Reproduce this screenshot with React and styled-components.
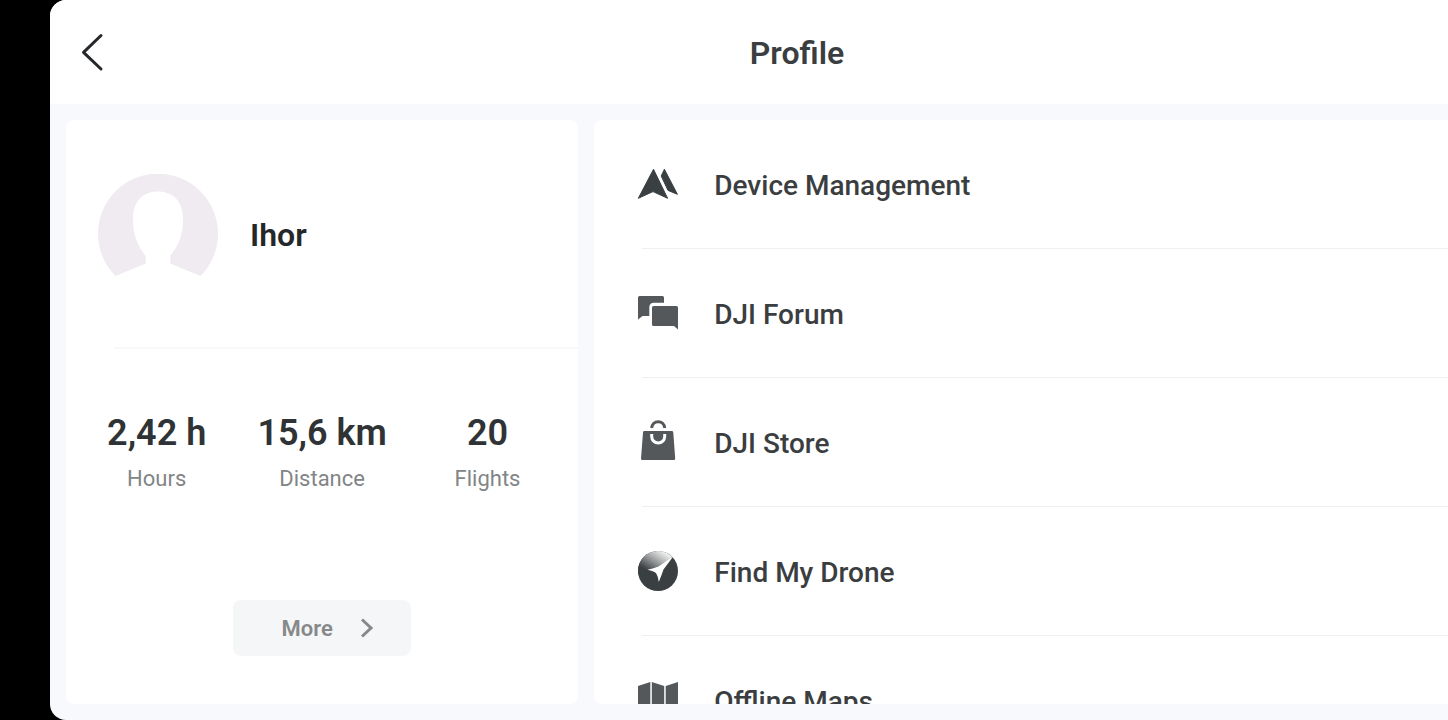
import React from 'react';
import styled, { createGlobalStyle } from 'styled-components';

const stats = [
  { label: 'Hours', value: '2,42 h' },
  { label: 'Distance', value: '15,6 km' },
  { label: 'Flights', value: '20' },
];

const DeviceIcon = () => (
  <Icon viewBox="0 0 40 40" aria-hidden="true">
    <g fill="#3a3f41" stroke="#3a3f41" strokeWidth="1" strokeLinejoin="round">
      <path d="M15.5 5.3 29.6 34.3 15 27.6.3 34.3Z" />
      <path d="M26.4 5.3 39.4 30.3 30 26.4 23.2 12Z" />
    </g>
  </Icon>
);

const ForumIcon = () => (
  <Icon viewBox="0 0 40 40" aria-hidden="true">
    <g fill="#55585b">
      <path d="M1.5 3H24.5Q26 3 26 4.5V9.8H16Q11.3 9.8 11.3 14.5V23H4.5L0 26.5V4.5Q0 3 1.5 3Z" />
      <path d="M15.5 13H38.5Q40 13 40 14.5V36.5L36 33H15.5Q14 33 14 31.5V14.5Q14 13 15.5 13Z" />
    </g>
  </Icon>
);

const StoreIcon = () => (
  <Icon viewBox="0 0 40 40" aria-hidden="true">
    <path
      d="M6.5 9H33.8Q35.2 9 35.3 10.4L37.2 36.4Q37.2 38 35.7 38H4.5Q3 38 3 36.4L5 10.4Q5.1 9 6.5 9Z"
      fill="#55585b"
    />
    <path d="M13.7 6C14 2 16.8-.3 20.2-.3S26.4 2 26.7 6" fill="none" stroke="#55585b" strokeWidth="3" />
    <path d="M13.7 12V14.5A6.5 6.5 0 0 0 26.7 14.5V12" fill="none" stroke="#fff" strokeWidth="3" />
  </Icon>
);

const DroneIcon = () => (
  <Icon viewBox="0 0 40 40" aria-hidden="true">
    <defs>
      <linearGradient id="radar" gradientUnits="userSpaceOnUse" x1="28" y1="2" x2="15" y2="23">
        <stop offset="0" stopColor="#f2f2f2" />
        <stop offset="0.45" stopColor="#a4a6a7" />
        <stop offset="1" stopColor="#3a3f41" />
      </linearGradient>
    </defs>
    <circle cx="20" cy="20" r="20" fill="#3a3f41" />
    <path d="M20 20 34.2 5.9A20 20 0 0 0 .3 23.5L12 22Z" fill="url(#radar)" />
    <path d="M35.2 5.5 25.5 18.5Q24 23 20.8 31Q20 25 18 22Q15 19.8 9.5 18.8Q16 17.5 20.5 15.6Z" fill="#fff" />
  </Icon>
);

const MapIcon = () => (
  <Icon viewBox="0 0 40 40" aria-hidden="true">
    <g fill="#55585b">
      <path d="M0 6 12.3 2V34L0 38Z" />
      <path d="M13.8 2 26.2 6V38L13.8 34Z" />
      <path d="M27.7 6 40 2V34L27.7 38Z" />
    </g>
  </Icon>
);

const menu = [
  { label: 'Device Management', icon: DeviceIcon },
  { label: 'DJI Forum', icon: ForumIcon },
  { label: 'DJI Store', icon: StoreIcon },
  { label: 'Find My Drone', icon: DroneIcon },
  { label: 'Offline Maps', icon: MapIcon },
];

const App = () => {
  return (
    <>
      <GlobalStyle />
      <Sheet>
        <Header>
          <BackButton type="button" aria-label="Back">
            <BackArrow viewBox="0 0 24 40" aria-hidden="true">
              <path d="M21 3.5 3.5 20.3 21 37" />
            </BackArrow>
          </BackButton>
          <Title>Profile</Title>
        </Header>
        <Content>
          <ProfileCard>
            <User>
              <Avatar viewBox="0 0 120 120" aria-hidden="true">
                <path d="M17.5 102A60 60 0 1 1 102.5 102L72.3 89.5V82C78 74 85 65 85 45C85 27 75 17.5 60 17.5S35 27 35 45C35 65 42 74 47.7 82V89.5Z" />
              </Avatar>
              <UserName>Ihor</UserName>
            </User>
            <Divider />
            <Stats>
              {stats.map((stat) => (
                <Stat key={stat.label}>
                  <StatLabel>{stat.label}</StatLabel>
                  <StatValue>{stat.value}</StatValue>
                </Stat>
              ))}
            </Stats>
            <MoreButton type="button">
              More
              <MoreArrow viewBox="0 0 16 20" aria-hidden="true">
                <path d="M3 1.5 12 10 3 18.5" />
              </MoreArrow>
            </MoreButton>
          </ProfileCard>
          <MenuCard>
            <Menu>
              {menu.map(({ label, icon: MenuIcon }) => (
                <MenuItem key={label}>
                  <MenuLink href="#">
                    <MenuIcon />
                    <MenuLabel>{label}</MenuLabel>
                  </MenuLink>
                </MenuItem>
              ))}
            </Menu>
          </MenuCard>
        </Content>
      </Sheet>
    </>
  );
};

const GlobalStyle = createGlobalStyle`
  * {
    box-sizing: border-box;
  }

  body {
    margin: 0;
    background-color: #000;
    font-family: Roboto, sans-serif;
  }
`;

const Sheet = styled.main`
  display: flex;
  flex-direction: column;
  height: 100vh;
  margin-left: 50px;
  background-color: #f7f9fc;
  border-radius: 16px 0 0 16px;
  overflow: hidden;
`;

const Header = styled.header`
  display: flex;
  align-items: center;
  flex-shrink: 0;
  height: 104px;
  background-color: #fff;
`;

const BackButton = styled.button`
  display: flex;
  align-items: center;
  width: 96px;
  height: 100%;
  padding: 0 30px;
  background: none;
  border: none;
`;

const BackArrow = styled.svg`
  width: 24px;
  height: 40px;
  fill: none;
  stroke: #25282a;
  stroke-width: 3;
  stroke-linecap: round;
  stroke-linejoin: round;
`;

const Title = styled.h1`
  flex: 1;
  margin: 0;
  padding-top: 2px;
  color: #3b3e40;
  font-size: 32px;
  font-weight: 600;
  text-align: center;
`;

const Content = styled.div`
  display: grid;
  flex: 1;
  grid-template-columns: minmax(0, 3fr) minmax(0, 5fr);
  grid-template-rows: minmax(0, 1fr);
  gap: 16px;
  min-height: 0;
  padding: 16px 0 16px 16px;
`;

const ProfileCard = styled.section`
  display: flex;
  flex-direction: column;
  background-color: #fff;
  border-radius: 8px;
  overflow: hidden;
`;

const User = styled.div`
  display: flex;
  align-items: center;
  gap: 32px;
  padding: 54px 32px 53px;
`;

const Avatar = styled.svg`
  width: 120px;
  height: 120px;
  fill: #efebf0;
`;

const UserName = styled.h2`
  margin: 0;
  padding-top: 2px;
  color: #252828;
  font-size: 32px;
  font-weight: 600;
`;

const Divider = styled.hr`
  width: auto;
  height: 2px;
  margin: 0 0 0 48px;
  background-color: #f8f8f8;
  border: none;
`;

const Stats = styled.dl`
  display: grid;
  grid-template-columns: repeat(3, 1fr);
  margin: 0;
  padding: 60px 8px 0;
`;

const Stat = styled.div`
  display: flex;
  flex-direction: column-reverse;
  align-items: center;
  gap: 8px;
`;

const StatLabel = styled.dt`
  color: #828586;
  font-size: 22px;
  line-height: 28px;
`;

const StatValue = styled.dd`
  margin: 0;
  color: #2f3335;
  font-size: 36px;
  font-weight: 600;
  line-height: 48px;
  white-space: nowrap;
`;

const MoreButton = styled.button`
  display: flex;
  align-items: center;
  align-self: center;
  gap: 26px;
  height: 56px;
  margin: auto 0 48px;
  padding: 0 36px 0 48px;
  background-color: #f4f6f8;
  border: none;
  border-radius: 8px;
  color: #868889;
  font-family: inherit;
  font-size: 22px;
  font-weight: 600;
`;

const MoreArrow = styled.svg`
  width: 16px;
  height: 20px;
  fill: none;
  stroke: #868889;
  stroke-width: 3;
  overflow: visible;
`;

const MenuCard = styled.nav`
  background-color: #fff;
  border-radius: 8px 0 0 8px;
  overflow: hidden;
`;

const Menu = styled.ul`
  margin: 0;
  padding: 0;
  list-style: none;
`;

const MenuItem = styled.li`
  & + &::before {
    content: '';
    display: block;
    height: 1px;
    margin-left: 48px;
    background-color: #efefef;
  }
`;

const MenuLink = styled.a`
  display: flex;
  align-items: center;
  gap: 36px;
  height: 128px;
  padding: 0 44px;
  color: #3b3e40;
  font-size: 28px;
  font-weight: 500;
  text-decoration: none;
`;

const MenuLabel = styled.span`
  padding-top: 2px;
`;

const Icon = styled.svg`
  flex-shrink: 0;
  width: 40px;
  height: 40px;
  overflow: visible;
`;

export default App;
